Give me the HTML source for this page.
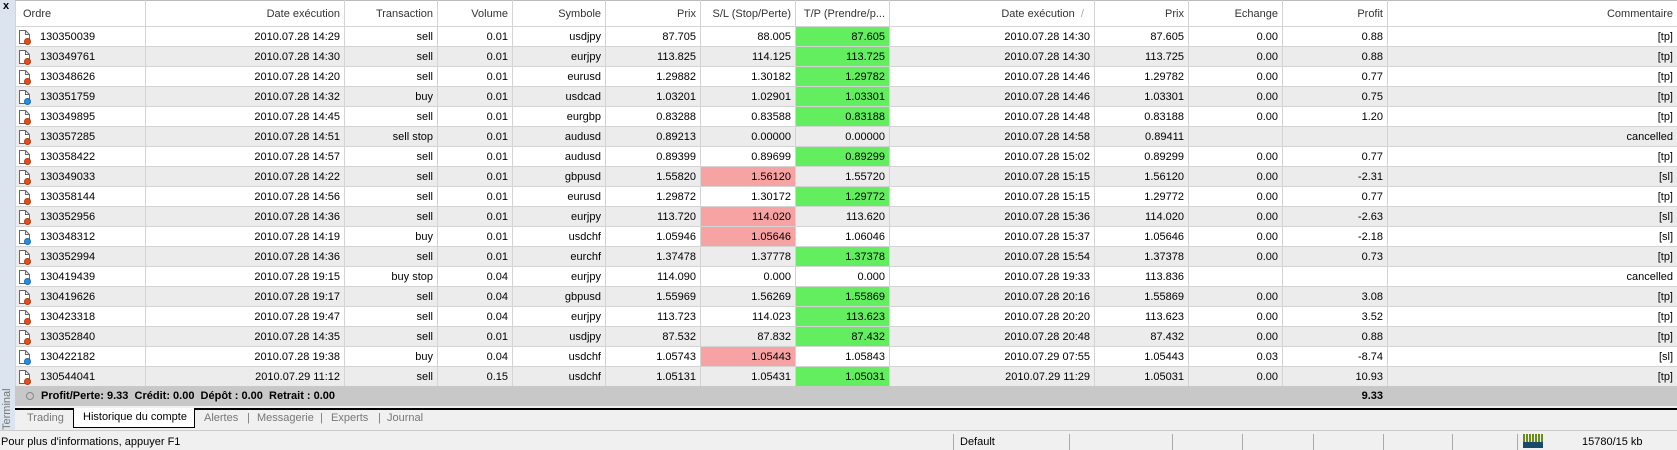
<!DOCTYPE html>
<html><head><meta charset="utf-8">
<style>
*{margin:0;padding:0;box-sizing:border-box}
body{width:1677px;height:449px;overflow:hidden;background:#f0f0f0;font-family:"Liberation Sans",sans-serif;font-size:11px;color:#000;position:relative}
#strip{position:absolute;left:0;top:0;width:15px;height:430px;background:#dbe4ef}
#x{position:absolute;left:3px;top:0;font-size:11px;font-weight:bold}
#term{position:absolute;left:0;top:430px;width:48px;transform-origin:0 0;transform:rotate(-90deg);font-size:11px;color:#777;white-space:nowrap;height:15px;line-height:14px}
table{position:absolute;left:15px;top:0;border-collapse:collapse;table-layout:fixed;width:1662px}
td,th{height:20px;border:1px solid #d4d4d4;text-align:right;padding:0 4px;white-space:nowrap;overflow:hidden;font-weight:normal}
th{height:26px;background:#fff;color:#333;border-top:1px solid #bbb}
tr:nth-child(even) td{background:#fff}
tr:nth-child(odd) td{background:#ececec}
td.g{background:#62ee5e!important}
td.r{background:#f7a3a3!important}
td.o{text-align:left;padding-left:24px;position:relative}
th.o{text-align:left;padding-left:7px}
.ic{position:absolute;left:3px;top:3px;width:11px;height:14px}
.ic i{position:absolute;right:-1px;bottom:-1px;width:7px;height:7px;border-radius:50%;background:#e0521c;border:1px solid #b33a10}
.ic.b i{background:#2a8fe0;border-color:#1a6ab0}
#tot{position:absolute;left:15px;top:386px;width:1662px;height:20px;background:#c8c8c8;font-weight:bold;line-height:20px}
#tot .c{position:absolute;left:11px;top:6px;width:8px;height:8px;border:1px solid #888;border-radius:50%}
#tabs{position:absolute;left:15px;top:408px;width:1662px;height:22px;border-top:2px solid #000;color:#777}
#tabs span{position:absolute;top:2px}
#act{position:absolute;left:58px;top:-2px;width:122px;height:20px;background:#fff;border:1px solid #000;border-top:none;color:#000;padding:3px 0 0 9px}
#status{position:absolute;left:0;top:430px;width:1677px;height:19px;border-top:1px solid #ccc;background:#f0f0f0}
#status span{position:absolute;top:5px}
.d{position:absolute;top:3px;width:1px;height:16px;background:#aaa}
</style></head><body>
<svg width="0" height="0" style="position:absolute"><defs><symbol id="pg" viewBox="0 0 11 14"><path d="M0.5 0.5H6.5L10.5 4.5V13.5H0.5Z" fill="#fff" stroke="#666"/><path d="M6.5 0.5V4.5H10.5" fill="none" stroke="#666"/></symbol></defs></svg>
<div id="strip"></div><div id="x">x</div>
<div id="term">Terminal</div>
<table>
<colgroup><col style="width:130px"><col style="width:199px"><col style="width:93px"><col style="width:75px"><col style="width:93px"><col style="width:95px"><col style="width:95px"><col style="width:94px"><col style="width:205px"><col style="width:94px"><col style="width:94px"><col style="width:105px"><col style="width:290px"></colgroup>
<tr><th class="o">Ordre</th><th>Date exécution</th><th>Transaction</th><th>Volume</th><th>Symbole</th><th>Prix</th><th>S/L (Stop/Perte)</th><th>T/P (Prendre/p...</th><th>Date exécution &nbsp;<span style="color:#aaa">/</span>&nbsp;&nbsp;</th><th>Prix</th><th>Echange</th><th>Profit</th><th>Commentaire</th></tr>
<tr><td class="o"><span class="ic"><svg width="11" height="14"><use href="#pg"/></svg><i></i></span>130350039</td><td>2010.07.28 14:29</td><td>sell</td><td>0.01</td><td>usdjpy</td><td>87.705</td><td>88.005</td><td class="g">87.605</td><td>2010.07.28 14:30</td><td>87.605</td><td>0.00</td><td>0.88</td><td>[tp]</td></tr>
<tr><td class="o"><span class="ic"><svg width="11" height="14"><use href="#pg"/></svg><i></i></span>130349761</td><td>2010.07.28 14:30</td><td>sell</td><td>0.01</td><td>eurjpy</td><td>113.825</td><td>114.125</td><td class="g">113.725</td><td>2010.07.28 14:30</td><td>113.725</td><td>0.00</td><td>0.88</td><td>[tp]</td></tr>
<tr><td class="o"><span class="ic"><svg width="11" height="14"><use href="#pg"/></svg><i></i></span>130348626</td><td>2010.07.28 14:20</td><td>sell</td><td>0.01</td><td>eurusd</td><td>1.29882</td><td>1.30182</td><td class="g">1.29782</td><td>2010.07.28 14:46</td><td>1.29782</td><td>0.00</td><td>0.77</td><td>[tp]</td></tr>
<tr><td class="o"><span class="ic b"><svg width="11" height="14"><use href="#pg"/></svg><i></i></span>130351759</td><td>2010.07.28 14:32</td><td>buy</td><td>0.01</td><td>usdcad</td><td>1.03201</td><td>1.02901</td><td class="g">1.03301</td><td>2010.07.28 14:46</td><td>1.03301</td><td>0.00</td><td>0.75</td><td>[tp]</td></tr>
<tr><td class="o"><span class="ic"><svg width="11" height="14"><use href="#pg"/></svg><i></i></span>130349895</td><td>2010.07.28 14:45</td><td>sell</td><td>0.01</td><td>eurgbp</td><td>0.83288</td><td>0.83588</td><td class="g">0.83188</td><td>2010.07.28 14:48</td><td>0.83188</td><td>0.00</td><td>1.20</td><td>[tp]</td></tr>
<tr><td class="o"><span class="ic"><svg width="11" height="14"><use href="#pg"/></svg><i></i></span>130357285</td><td>2010.07.28 14:51</td><td>sell stop</td><td>0.01</td><td>audusd</td><td>0.89213</td><td>0.00000</td><td>0.00000</td><td>2010.07.28 14:58</td><td>0.89411</td><td></td><td></td><td>cancelled</td></tr>
<tr><td class="o"><span class="ic"><svg width="11" height="14"><use href="#pg"/></svg><i></i></span>130358422</td><td>2010.07.28 14:57</td><td>sell</td><td>0.01</td><td>audusd</td><td>0.89399</td><td>0.89699</td><td class="g">0.89299</td><td>2010.07.28 15:02</td><td>0.89299</td><td>0.00</td><td>0.77</td><td>[tp]</td></tr>
<tr><td class="o"><span class="ic"><svg width="11" height="14"><use href="#pg"/></svg><i></i></span>130349033</td><td>2010.07.28 14:22</td><td>sell</td><td>0.01</td><td>gbpusd</td><td>1.55820</td><td class="r">1.56120</td><td>1.55720</td><td>2010.07.28 15:15</td><td>1.56120</td><td>0.00</td><td>-2.31</td><td>[sl]</td></tr>
<tr><td class="o"><span class="ic"><svg width="11" height="14"><use href="#pg"/></svg><i></i></span>130358144</td><td>2010.07.28 14:56</td><td>sell</td><td>0.01</td><td>eurusd</td><td>1.29872</td><td>1.30172</td><td class="g">1.29772</td><td>2010.07.28 15:15</td><td>1.29772</td><td>0.00</td><td>0.77</td><td>[tp]</td></tr>
<tr><td class="o"><span class="ic"><svg width="11" height="14"><use href="#pg"/></svg><i></i></span>130352956</td><td>2010.07.28 14:36</td><td>sell</td><td>0.01</td><td>eurjpy</td><td>113.720</td><td class="r">114.020</td><td>113.620</td><td>2010.07.28 15:36</td><td>114.020</td><td>0.00</td><td>-2.63</td><td>[sl]</td></tr>
<tr><td class="o"><span class="ic b"><svg width="11" height="14"><use href="#pg"/></svg><i></i></span>130348312</td><td>2010.07.28 14:19</td><td>buy</td><td>0.01</td><td>usdchf</td><td>1.05946</td><td class="r">1.05646</td><td>1.06046</td><td>2010.07.28 15:37</td><td>1.05646</td><td>0.00</td><td>-2.18</td><td>[sl]</td></tr>
<tr><td class="o"><span class="ic"><svg width="11" height="14"><use href="#pg"/></svg><i></i></span>130352994</td><td>2010.07.28 14:36</td><td>sell</td><td>0.01</td><td>eurchf</td><td>1.37478</td><td>1.37778</td><td class="g">1.37378</td><td>2010.07.28 15:54</td><td>1.37378</td><td>0.00</td><td>0.73</td><td>[tp]</td></tr>
<tr><td class="o"><span class="ic b"><svg width="11" height="14"><use href="#pg"/></svg><i></i></span>130419439</td><td>2010.07.28 19:15</td><td>buy stop</td><td>0.04</td><td>eurjpy</td><td>114.090</td><td>0.000</td><td>0.000</td><td>2010.07.28 19:33</td><td>113.836</td><td></td><td></td><td>cancelled</td></tr>
<tr><td class="o"><span class="ic"><svg width="11" height="14"><use href="#pg"/></svg><i></i></span>130419626</td><td>2010.07.28 19:17</td><td>sell</td><td>0.04</td><td>gbpusd</td><td>1.55969</td><td>1.56269</td><td class="g">1.55869</td><td>2010.07.28 20:16</td><td>1.55869</td><td>0.00</td><td>3.08</td><td>[tp]</td></tr>
<tr><td class="o"><span class="ic"><svg width="11" height="14"><use href="#pg"/></svg><i></i></span>130423318</td><td>2010.07.28 19:47</td><td>sell</td><td>0.04</td><td>eurjpy</td><td>113.723</td><td>114.023</td><td class="g">113.623</td><td>2010.07.28 20:20</td><td>113.623</td><td>0.00</td><td>3.52</td><td>[tp]</td></tr>
<tr><td class="o"><span class="ic"><svg width="11" height="14"><use href="#pg"/></svg><i></i></span>130352840</td><td>2010.07.28 14:35</td><td>sell</td><td>0.01</td><td>usdjpy</td><td>87.532</td><td>87.832</td><td class="g">87.432</td><td>2010.07.28 20:48</td><td>87.432</td><td>0.00</td><td>0.88</td><td>[tp]</td></tr>
<tr><td class="o"><span class="ic b"><svg width="11" height="14"><use href="#pg"/></svg><i></i></span>130422182</td><td>2010.07.28 19:38</td><td>buy</td><td>0.04</td><td>usdchf</td><td>1.05743</td><td class="r">1.05443</td><td>1.05843</td><td>2010.07.29 07:55</td><td>1.05443</td><td>0.03</td><td>-8.74</td><td>[sl]</td></tr>
<tr><td class="o"><span class="ic"><svg width="11" height="14"><use href="#pg"/></svg><i></i></span>130544041</td><td>2010.07.29 11:12</td><td>sell</td><td>0.15</td><td>usdchf</td><td>1.05131</td><td>1.05431</td><td class="g">1.05031</td><td>2010.07.29 11:29</td><td>1.05031</td><td>0.00</td><td>10.93</td><td>[tp]</td></tr>
</table>
<div id="tot"><span class="c"></span><span style="position:absolute;left:26px">Profit/Perte: 9.33&nbsp; Crédit: 0.00&nbsp; Dépôt : 0.00&nbsp; Retrait : 0.00</span><span style="position:absolute;left:1267px;width:105px;text-align:right;padding-right:4px">9.33</span></div>
<div id="tabs">
<span style="left:12px">Trading</span>
<div id="act">Historique du compte</div>
<span style="left:189px">Alertes</span><span style="left:232px">|</span>
<span style="left:242px">Messagerie</span><span style="left:305px">|</span>
<span style="left:316px">Experts</span><span style="left:363px">|</span>
<span style="left:372px">Journal</span>
</div>
<div id="status">
<span style="left:1px">Pour plus d'informations, appuyer F1</span>
<div class="d" style="left:953px"></div><span style="left:960px">Default</span>
<div class="d" style="left:1069px"></div><div class="d" style="left:1172px"></div><div class="d" style="left:1242px"></div><div class="d" style="left:1313px"></div><div class="d" style="left:1383px"></div><div class="d" style="left:1452px"></div><div class="d" style="left:1517px"></div>
<svg style="position:absolute;left:1523px;top:3px" width="22" height="14"><g fill="#6a8a1a"><rect x="0" y="0" width="2" height="8"/><rect x="3" y="0" width="2" height="8"/><rect x="6" y="0" width="2" height="8"/><rect x="9" y="0" width="2" height="8"/><rect x="12" y="0" width="2" height="8"/><rect x="15" y="0" width="2" height="8"/><rect x="18" y="0" width="2" height="8"/></g><g fill="#1a4a6a"><rect x="0" y="8" width="20" height="6"/></g></svg>
<span style="left:1582px">15780/15 kb</span>
</div>
</body></html>
